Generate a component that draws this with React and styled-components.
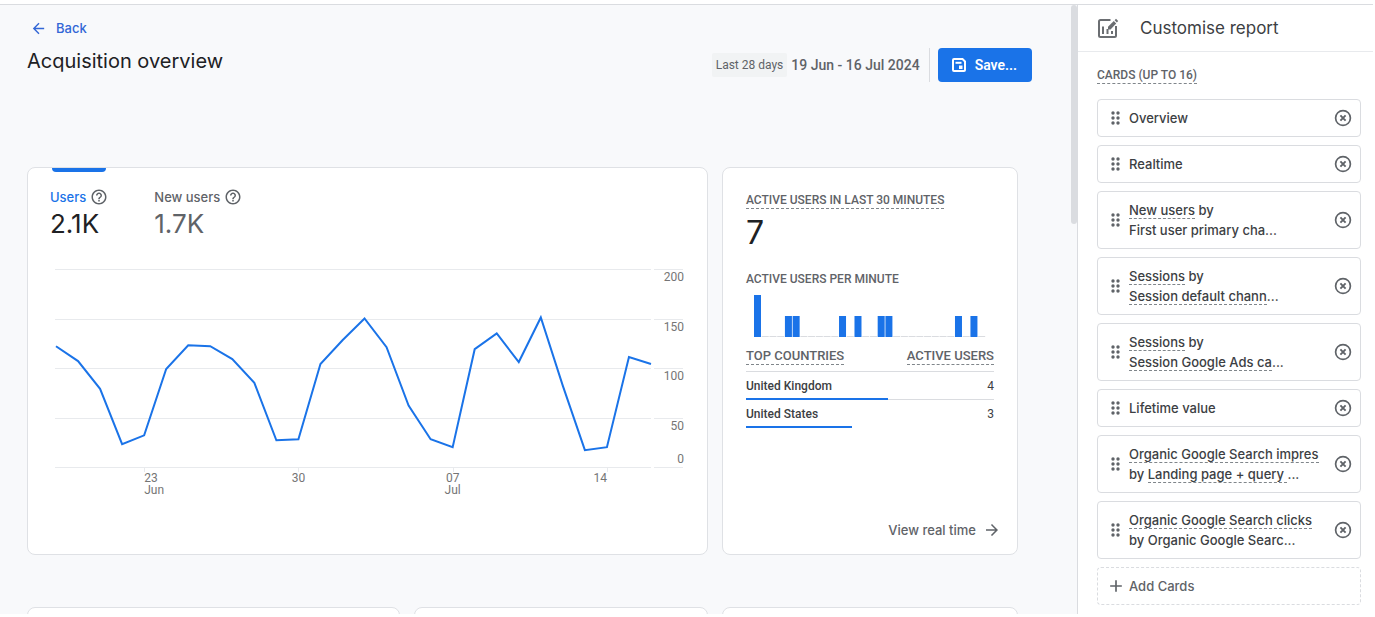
import styled, { createGlobalStyle } from "styled-components";
import {
    MdAdd,
    MdArrowBack,
    MdArrowForward,
    MdHelpOutline,
} from "react-icons/md";

const DAILY_USERS = [
    122, 107, 79, 23, 32, 99, 123, 122, 109, 85, 27, 28, 104,
    128, 150, 121, 62, 28, 20, 119, 135, 106, 151, 82, 17, 20,
    111, 104,
];

const DAY_LABELS = [
    { day: 4, lines: ["23", "Jun"], anchor: "start" },
    { day: 11, lines: ["30"], anchor: "middle" },
    { day: 18, lines: ["07", "Jul"], anchor: "middle" },
    { day: 25, lines: ["14"], anchor: "end" },
];

const USERS_PER_MINUTE = [
    2, 0, 0, 0, 1, 1, 0, 0, 0, 0, 0, 1, 0, 1, 0, 0, 1, 1, 0, 0,
    0, 0, 0, 0, 0, 0, 1, 0, 1, 0,
];

const COUNTRIES = [
    { name: "United Kingdom", users: 4 },
    { name: "United States", users: 3 },
];

const ACTIVE_USERS = 7;

// "term" parts get the dotted underline
const REPORT_CARDS = [
    { lines: [[{ text: "Overview" }]] },
    { lines: [[{ text: "Realtime" }]] },
    {
        lines: [
            [{ text: "New users", term: true }, { text: " by" }],
            [{ text: "First user primary cha..." }],
        ],
    },
    {
        lines: [
            [{ text: "Sessions", term: true }, { text: " by" }],
            [
                { text: "Session default chann", term: true },
                { text: "..." },
            ],
        ],
    },
    {
        lines: [
            [{ text: "Sessions", term: true }, { text: " by" }],
            [
                { text: "Session Google Ads ca", term: true },
                { text: "..." },
            ],
        ],
    },
    { lines: [[{ text: "Lifetime value" }]] },
    {
        lines: [
            [{ text: "Organic Google Search impres", term: true }],
            [
                { text: "by " },
                { text: "Landing page + query ", term: true },
                { text: "..." },
            ],
        ],
    },
    {
        lines: [
            [{ text: "Organic Google Search clicks", term: true }],
            [{ text: "by Organic Google Searc..." }],
        ],
    },
];

const UsersChart = () => {
    const left = 6;
    const right = 601;
    const bottom = 205;
    const unit = 0.99;
    const step = (right - left) / (DAILY_USERS.length - 1);
    const x = (day) => left + day * step;
    const y = (value) => bottom - value * unit;

    return (
        <ChartSvg
            viewBox="0 0 634 236"
            role="img"
            aria-label="Users per day"
        >
            {[0, 50, 100, 150, 200].map((value) => (
                <g key={value}>
                    <GridLine
                        x1={left - 1}
                        x2={right}
                        y1={Math.round(y(value)) + 0.5}
                        y2={Math.round(y(value)) + 0.5}
                    />
                    <GridLine
                        x1={right + 3}
                        x2={633}
                        y1={Math.round(y(value)) + 0.5}
                        y2={Math.round(y(value)) + 0.5}
                    />
                    <AxisText
                        x={634}
                        y={value === 0 ? y(0) - 4 : y(value) + 12}
                        textAnchor="end"
                    >
                        {value}
                    </AxisText>
                </g>
            ))}
            {DAY_LABELS.map(({ day, lines, anchor }) => (
                <g key={day}>
                    <GridLine
                        x1={Math.round(x(day)) + 0.5}
                        x2={Math.round(x(day)) + 0.5}
                        y1={bottom}
                        y2={bottom + 5}
                    />
                    {lines.map((line, i) => (
                        <AxisText
                            key={line}
                            x={x(day)}
                            y={bottom + 15 + i * 12}
                            textAnchor={anchor}
                        >
                            {line}
                        </AxisText>
                    ))}
                </g>
            ))}
            <TrendLine
                points={DAILY_USERS.map(
                    (value, day) => `${x(day)},${y(value)}`
                ).join(" ")}
            />
        </ChartSvg>
    );
};

const MinuteChart = () => (
    <MinuteSvg
        viewBox="0 0 248 43"
        role="img"
        aria-label="Active users per minute"
    >
        {USERS_PER_MINUTE.map((users, i) => (
            <rect
                key={i}
                x={8 + i * 7.73}
                y={users ? 42 - users * 21 : 41}
                width={7}
                height={users ? users * 21 : 1}
                fill={users ? "#1a73e8" : "#dadce0"}
            />
        ))}
    </MinuteSvg>
);

const EditChartIcon = () => (
    <svg
        width="22"
        height="22"
        viewBox="0 0 22 22"
        fill="none"
        stroke="#6b6e72"
        strokeWidth="2"
        aria-hidden="true"
    >
        <path d="M13.500 3H3.500Q2 3 2 4.500V18.500Q2 20 3.500 20H17.500Q19 20 19 18.500V9" />
        <path d="M6 9.500V17M10.500 12V17M15 14V17" />
        <path d="M11 12.500V9.800L16.800 4L19.200 6.400L13.500 12.500Z" fill="#6b6e72" stroke="none" />
        <path d="M17.600 3.200L19 1.800L21.200 4L19.900 5.500Z" fill="#6b6e72" stroke="none" />
    </svg>
);

const SaveIcon = () => (
    <svg
        width="14"
        height="14"
        viewBox="0 0 14 14"
        fill="none"
        stroke="#ffffff"
        strokeWidth="2"
        aria-hidden="true"
    >
        <path d="M2 1H10.500L13 3.500V12Q13 13 12 13H2Q1 13 1 12V2Q1 1 2 1Z" />
        <path d="M3.500 4.800H9.500" />
        <path d="M7 7.500H10.500V11H7Z" fill="#ffffff" stroke="none" />
    </svg>
);

const DragIcon = () => (
    <svg
        width="18"
        height="18"
        viewBox="0 0 18 18"
        fill="#5f6368"
        aria-hidden="true"
    >
        {[4, 9, 14].map((cy) => (
            <g key={cy}>
                <circle cx="6" cy={cy} r="1.700" />
                <circle cx="11" cy={cy} r="1.700" />
            </g>
        ))}
    </svg>
);

const RemoveIcon = () => (
    <svg
        width="20"
        height="20"
        viewBox="0 0 20 20"
        fill="none"
        stroke="currentColor"
        aria-hidden="true"
    >
        <circle cx="10" cy="10" r="7.400" strokeWidth="1.700" />
        <path d="M7.400 7.400L12.600 12.600M12.600 7.400L7.400 12.600" strokeWidth="1.900" />
    </svg>
);

const Metric = ({ label, value, active }) => (
    <MetricTab type="button" $active={active}>
        <MetricLabel $active={active}>
            {label}
            <MdHelpOutline size={18} color="#5f6368" />
        </MetricLabel>
        <MetricValue $active={active}>{value}</MetricValue>
    </MetricTab>
);

const ReportCard = ({ lines }) => (
    <CardItem>
        <DragIcon />
        <CardText>
            {lines.map((parts, i) => (
                <CardLine key={i}>
                    {parts.map(({ text, term }) =>
                        term ? (
                            <Term key={text}>{text}</Term>
                        ) : (
                            text
                        )
                    )}
                </CardLine>
            ))}
        </CardText>
        <IconButton type="button" aria-label="Remove card">
            <RemoveIcon />
        </IconButton>
    </CardItem>
);

const App = () => (
    <>
        <GlobalStyle />
        <Page>
            <Main>
                <Content>
                    <BackLink href="#back">
                        <MdArrowBack size={17} />
                        Back
                    </BackLink>
                    <Header>
                        <Title>Acquisition overview</Title>
                        <Actions>
                            <RangeChip>Last 28 days</RangeChip>
                            <DateRange>19 Jun - 16 Jul 2024</DateRange>
                            <Divider />
                            <SaveButton type="button">
                                <SaveIcon />
                                Save...
                            </SaveButton>
                        </Actions>
                    </Header>
                    <CardGrid>
                        <WideCard>
                            <Metrics>
                                <Metric label="Users" value="2.1K" active />
                                <Metric label="New users" value="1.7K" />
                            </Metrics>
                            <UsersChart />
                        </WideCard>
                        <Card>
                            <Overline $dashed>
                                Active users in last 30 minutes
                            </Overline>
                            <ActiveCount>{ACTIVE_USERS}</ActiveCount>
                            <Overline>Active users per minute</Overline>
                            <MinuteChart />
                            <CountryTable>
                                <thead>
                                    <tr>
                                        <th>
                                            <TableOverline $dashed>
                                                Top countries
                                            </TableOverline>
                                        </th>
                                        <th>
                                            <TableOverline $dashed>
                                                Active users
                                            </TableOverline>
                                        </th>
                                    </tr>
                                </thead>
                                <tbody>
                                    {COUNTRIES.map(({ name, users }) => (
                                        <CountryRow
                                            key={name}
                                            $share={users / ACTIVE_USERS}
                                        >
                                            <td>{name}</td>
                                            <td>{users}</td>
                                        </CountryRow>
                                    ))}
                                </tbody>
                            </CountryTable>
                            <RealtimeLink href="#realtime">
                                View real time
                                <MdArrowForward size={18} />
                            </RealtimeLink>
                        </Card>
                    </CardGrid>
                    <CardGrid>
                        <Card />
                        <Card />
                        <Card />
                    </CardGrid>
                </Content>
                <ScrollThumb />
            </Main>
            <Aside>
                <AsideHeader>
                    <EditChartIcon />
                    <AsideTitle>Customise report</AsideTitle>
                </AsideHeader>
                <AsideBody>
                    <Overline $dashed>Cards (up to 16)</Overline>
                    <CardList>
                        {REPORT_CARDS.map(({ lines }, i) => (
                            <ReportCard key={i} lines={lines} />
                        ))}
                    </CardList>
                    <AddButton type="button">
                        <MdAdd size={20} />
                        Add Cards
                    </AddButton>
                </AsideBody>
            </Aside>
        </Page>
    </>
);

export default App;

const GlobalStyle = createGlobalStyle`
    * {
        box-sizing: border-box;
    }

    body {
        margin: 0;
        background: #ffffff;
        color: #3c4043;
        font-family: "Inter", sans-serif;
    }

    button {
        font-family: inherit;
        cursor: pointer;
    }

    svg {
        flex-shrink: 0;
    }
`;

const Page = styled.div`
    display: flex;
    height: 100vh;
    padding: 4px 2px 3px 0;
`;

const Main = styled.main`
    position: relative;
    flex: 1;
    min-width: 0;
    overflow: hidden;
    background: #f8f9fb;
    border-top: 1px solid #dadce0;
`;

const Content = styled.div`
    padding: 14px 59px 0 27px;
`;

const ScrollThumb = styled.div`
    position: absolute;
    top: 0;
    right: 0;
    width: 6px;
    height: 36%;
    border-radius: 3px;
    background: #dadce0;
`;

const BackLink = styled.a`
    display: inline-flex;
    align-items: center;
    gap: 9px;
    padding-left: 3px;
    font-weight: 500;
    font-size: 13px;
    line-height: 18px;
    color: #3367d6;
    text-decoration: none;
`;

const Header = styled.header`
    display: flex;
    align-items: flex-start;
    justify-content: space-between;
    height: 126px;
    margin-right: -14px;
`;

const Title = styled.h1`
    margin: 6px 0 0;
    font-weight: 400;
    font-size: 20px;
    line-height: 28px;
    color: #202124;
`;

const Actions = styled.div`
    display: flex;
    align-items: center;
    margin-top: 7px;
    font-family: "Roboto", sans-serif;
    color: #5f6368;
`;

const RangeChip = styled.span`
    padding: 4px;
    border-radius: 2px;
    background: #f1f3f4;
    font-size: 12px;
    line-height: 16px;
`;

const DateRange = styled.span`
    margin-left: 4px;
    font-weight: 500;
    font-size: 14px;
    line-height: 20px;
`;

const Divider = styled.span`
    width: 1px;
    height: 34px;
    margin: 0 8px 0 9px;
    background: #dadce0;
`;

const SaveButton = styled.button`
    display: flex;
    align-items: center;
    gap: 9px;
    height: 34px;
    padding: 0 15px 0 14px;
    border: none;
    border-radius: 4px;
    background: #1a73e8;
    font-weight: 600;
    font-size: 14px;
    color: #ffffff;
`;

const CardGrid = styled.div`
    display: grid;
    grid-template-columns: 373fr 294fr 296fr;
    gap: 14px;
    margin-bottom: 52px;
`;

const Card = styled.section`
    display: flex;
    flex-direction: column;
    align-items: flex-start;
    min-height: 388px;
    padding: 24px 23px 14px;
    border: 1px solid #dfe1e5;
    border-radius: 8px;
    background: #ffffff;
`;

const WideCard = styled(Card)`
    grid-column: span 2;
    padding-top: 0;
    padding-left: 22px;
`;

const Metrics = styled.div`
    display: flex;
    gap: 46px;
`;

const MetricTab = styled.button`
    position: relative;
    padding: 20px 0 0;
    border: none;
    background: none;
    text-align: left;

    &::before {
        content: "";
        display: ${({ $active }) => ($active ? "block" : "none")};
        position: absolute;
        top: 0;
        left: 2px;
        right: 2px;
        height: 4px;
        border-radius: 0 0 4px 4px;
        background: #1a73e8;
    }
`;

const MetricLabel = styled.span`
    display: flex;
    align-items: center;
    gap: 4px;
    font-weight: 500;
    font-size: 13px;
    line-height: 18px;
    color: ${({ $active }) => ($active ? "#1a73e8" : "#5f6368")};
`;

const MetricValue = styled.span`
    display: block;
    font-size: 26px;
    line-height: 36px;
    color: ${({ $active }) => ($active ? "#202124" : "#5f6368")};
`;

const ChartSvg = styled.svg`
    display: block;
    width: 100%;
    margin-top: 20px;
`;

const GridLine = styled.line`
    stroke: #e8eaed;
`;

const AxisText = styled.text`
    font-family: "Roboto", sans-serif;
    font-size: 12px;
    fill: #757575;
`;

const TrendLine = styled.polyline`
    fill: none;
    stroke: #1a73e8;
    stroke-width: 2px;
`;

const Overline = styled.span`
    display: inline-block;
    font-family: "Roboto", sans-serif;
    font-weight: 500;
    font-size: 12px;
    line-height: 16px;
    text-transform: uppercase;
    color: #5f6368;
    border-bottom: ${({ $dashed }) =>
        $dashed ? "1px dashed #80868b" : "none"};
`;

const TableOverline = styled(Overline)`
    font-size: 13px;
`;

const ActiveCount = styled.strong`
    margin-bottom: 14px;
    font-weight: 400;
    font-size: 32px;
    line-height: 48px;
    color: #202124;
`;

const MinuteSvg = styled.svg`
    display: block;
    width: 100%;
    margin-top: 8px;
`;

const CountryTable = styled.table`
    width: 100%;
    margin-top: 10px;
    border-collapse: collapse;
    font-family: "Roboto", sans-serif;
    font-weight: 500;
    font-size: 12px;
    line-height: 16px;

    th {
        padding: 0 0 6px;
        border-bottom: 1px solid #dadce0;
        text-align: left;
    }

    td {
        padding: 6px 0 5px;
    }

    th:last-child,
    td:last-child {
        text-align: right;
    }

    td:last-child {
        font-weight: 400;
    }
`;

const CountryRow = styled.tr`
    position: relative;

    &:not(:last-child) td {
        border-bottom: 1px solid #dadce0;
    }

    &::after {
        content: "";
        position: absolute;
        left: 0;
        bottom: -1px;
        width: ${({ $share }) => $share * 100}%;
        height: 2px;
        background: #1a73e8;
    }
`;

const RealtimeLink = styled.a`
    display: flex;
    align-items: center;
    gap: 7px;
    align-self: flex-end;
    margin: auto -7px 0 0;
    font-weight: 500;
    font-size: 13px;
    line-height: 20px;
    color: #5f6368;
    text-decoration: none;
`;

const Aside = styled.aside`
    width: 296px;
    overflow: hidden;
    border-top: 1px solid #dadce0;
    border-left: 1px solid #dadce0;
    background: #ffffff;
`;

const AsideHeader = styled.div`
    display: flex;
    align-items: center;
    gap: 21px;
    height: 47px;
    padding-left: 19px;
    border-bottom: 1px solid #e8eaed;
`;

const AsideTitle = styled.h2`
    margin: 0;
    font-weight: 400;
    font-size: 17px;
    line-height: 24px;
    color: #3c4043;
`;

const AsideBody = styled.div`
    padding: 11px 12px 0 19px;
`;

const CardList = styled.ul`
    display: flex;
    flex-direction: column;
    gap: 8px;
    margin: 15px 0 8px;
    padding: 0;
    list-style: none;
`;

const CardItem = styled.li`
    display: flex;
    align-items: center;
    gap: 4px;
    padding: 8px 7px 8px 9px;
    border: 1px solid #dadce0;
    border-radius: 4px;
`;

const CardText = styled.div`
    flex: 1;
    min-width: 0;
`;

const CardLine = styled.div`
    overflow: hidden;
    white-space: nowrap;
    font-weight: 500;
    font-size: 13px;
    line-height: 20px;
    color: #3c4043;
`;

const Term = styled.span`
    border-bottom: 1px dashed #80868b;
    white-space: pre;
`;

const IconButton = styled.button`
    display: flex;
    padding: 0;
    border: none;
    background: none;
    color: #5f6368;
`;

const AddButton = styled.button`
    display: flex;
    align-items: center;
    gap: 3px;
    width: 100%;
    height: 38px;
    padding: 0 8px;
    border: 1px dashed #dadce0;
    border-radius: 4px;
    background: none;
    font-weight: 500;
    font-size: 13px;
    color: #5f6368;
`;
